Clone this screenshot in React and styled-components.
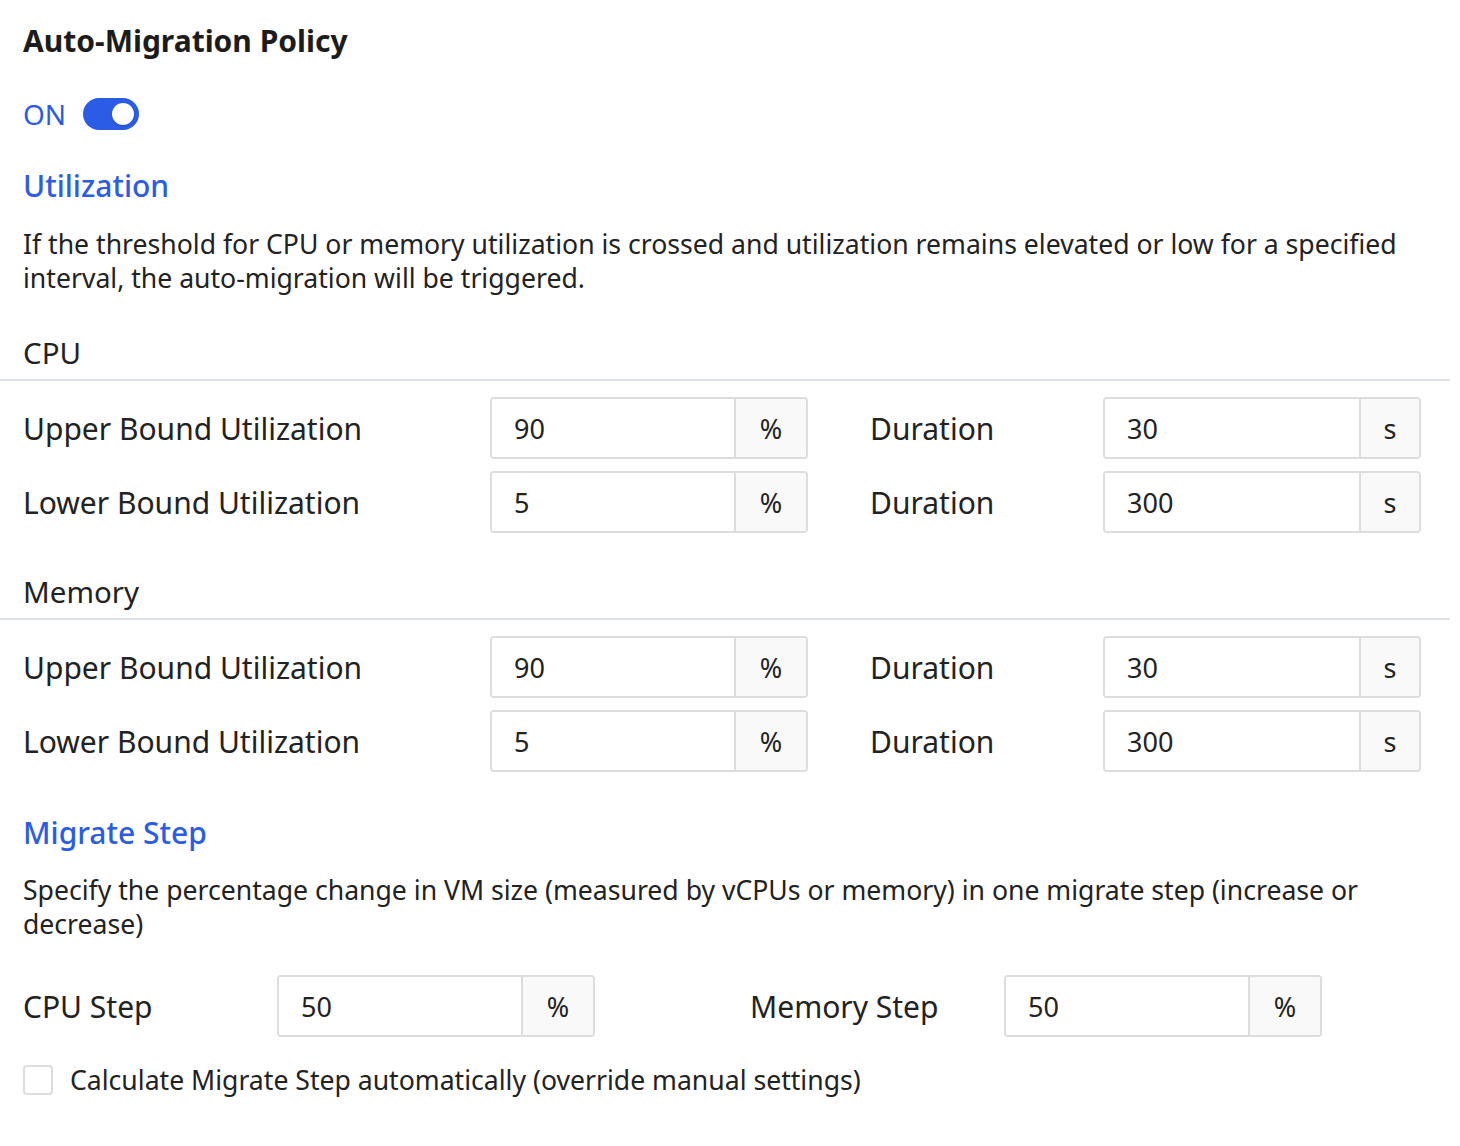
import React from "react";
import styled, { createGlobalStyle } from "styled-components";

const Global = createGlobalStyle`
  html, body { margin: 0; padding: 0; background: #fff; }
  body { font-family: "Noto Sans", "Open Sans", sans-serif; color: #222; }
`;

const Page = styled.div`
  width: 1450px;
  padding: 20px 0 40px;
`;

const Inner = styled.div`
  padding-left: 23px;
  width: 1398px;
`;

const Title = styled.h1`
  margin: 0;
  font-size: 30px;
  font-weight: 700;
  line-height: 42px;
  color: #1c1c1c;
`;

const ToggleRow = styled.div`
  display: flex;
  align-items: center;
  gap: 17px;
  margin-top: 34px;
  height: 36px;
`;

const OnText = styled.span`
  font-size: 28px;
  color: #2b5ce6;
`;

const Switch = styled.span`
  position: relative;
  display: inline-block;
  width: 56px;
  height: 32px;
  border-radius: 16px;
  background: #2b5ce6;
  &::after {
    content: "";
    position: absolute;
    top: 5px;
    right: 5px;
    width: 22px;
    height: 22px;
    border-radius: 50%;
    background: #fff;
    box-shadow: 0 1px 2px rgba(0,0,0,0.2);
  }
`;

const SectionTitle = styled.h2`
  margin: ${(p) => p.$mt || 0}px 0 0;
  font-size: 30px;
  font-weight: 500;
  line-height: 42px;
  color: #2b5ce6;
`;

const Para = styled.p`
  margin: ${(p) => p.$mt || 0}px 0 0;
  font-size: 26.6px;
  line-height: 34px;
  color: #222;
`;

const GroupHeader = styled.div`
  margin-top: ${(p) => p.$mt}px;
  border-bottom: 2px solid #dde0e4;
  padding-left: 23px;
  height: 44px;
  font-size: 29.5px;
  line-height: 36px;
  color: #222;
`;

const Grid = styled.div`
  display: grid;
  grid-template-columns: 467px 318px 1fr 318px;
  grid-auto-rows: 62px;
  row-gap: 12px;
  padding-top: 16px;
`;

const Label = styled.div`
  display: flex;
  align-items: center;
  font-size: 30px;
  color: #222;
  padding-left: ${(p) => p.$pl || 0}px;
`;

const InputGroup = styled.div`
  display: flex;
  height: 62px;
  border: 2px solid #ddd;
  border-radius: 4px;
  box-sizing: border-box;
  overflow: hidden;
`;

const Value = styled.div`
  flex: 1;
  display: flex;
  align-items: center;
  padding-left: 22px;
  font-size: 27px;
  color: #222;
  background: #fff;
`;

const Suffix = styled.div`
  box-sizing: border-box;
  width: ${(p) => p.$w}px;
  display: flex;
  align-items: center;
  justify-content: center;
  border-left: 2px solid #ddd;
  background: #f9f9f9;
  font-size: 27px;
  color: #222;
`;

const StepGrid = styled.div`
  display: grid;
  grid-template-columns: 254px 318px 155px 254px 318px;
  grid-auto-rows: 62px;
  margin-top: 34px;
`;

const CheckRow = styled.label`
  display: flex;
  align-items: center;
  gap: 17px;
  margin-top: 25px;
  font-size: 26.6px;
  color: #222;
`;

const Box = styled.span`
  width: 30px;
  height: 30px;
  box-sizing: border-box;
  border: 2px solid #ddd;
  border-radius: 4px;
  background: #fff;
`;

function Field({ value, unit }) {
  return (
    <InputGroup>
      <Value>{value}</Value>
      <Suffix $w={unit === "s" ? 60 : 72}>{unit}</Suffix>
    </InputGroup>
  );
}

function Bounds() {
  return (
    <Inner>
      <Grid>
        <Label>Upper Bound Utilization</Label>
        <Field value="90" unit="%" />
        <Label $pl={62}>Duration</Label>
        <Field value="30" unit="s" />
        <Label>Lower Bound Utilization</Label>
        <Field value="5" unit="%" />
        <Label $pl={62}>Duration</Label>
        <Field value="300" unit="s" />
      </Grid>
    </Inner>
  );
}

export default function App() {
  return (
    <>
      <Global />
      <Page>
        <Inner>
          <Title>Auto-Migration Policy</Title>
          <ToggleRow>
            <OnText>ON</OnText>
            <Switch />
          </ToggleRow>
          <SectionTitle $mt={33}>Utilization</SectionTitle>
          <Para $mt={20}>
            If the threshold for CPU or memory utilization is crossed and utilization remains elevated or low for a specified interval, the auto-migration will be triggered.
          </Para>
        </Inner>
        <GroupHeader $mt={40}>CPU</GroupHeader>
        <Bounds />
        <GroupHeader $mt={41}>Memory</GroupHeader>
        <Bounds />
        <Inner>
          <SectionTitle $mt={40}>Migrate Step</SectionTitle>
          <Para $mt={19}>
            Specify the percentage change in VM size (measured by vCPUs or memory) in one migrate step (increase or decrease)
          </Para>
          <StepGrid>
            <Label>CPU Step</Label>
            <Field value="50" unit="%" />
            <span />
            <Label>Memory Step</Label>
            <Field value="50" unit="%" />
          </StepGrid>
          <CheckRow>
            <Box />
            Calculate Migrate Step automatically (override manual settings)
          </CheckRow>
        </Inner>
      </Page>
    </>
  );
}
